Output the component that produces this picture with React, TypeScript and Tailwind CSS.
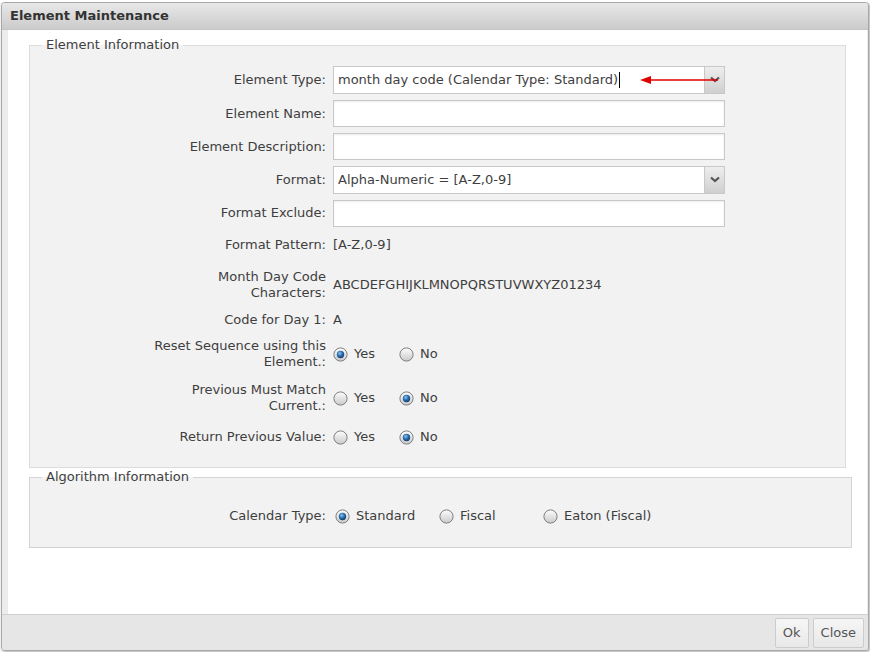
import React from 'react';

const font = { fontFamily: '"DejaVu Sans", Verdana, sans-serif' };

const Radio = ({ checked }: { checked?: boolean }) => (
  <svg width="15" height="15" viewBox="0 0 15 15" className="shrink-0">
    <defs>
      <linearGradient id="rg" x1="0" y1="0" x2="0" y2="1">
        <stop offset="0" stopColor="#fdfdfd" />
        <stop offset="1" stopColor="#cacaca" />
      </linearGradient>
      <radialGradient id="dot" cx="0.4" cy="0.35" r="0.7">
        <stop offset="0" stopColor="#8fc4f0" />
        <stop offset="0.5" stopColor="#2a6fb0" />
        <stop offset="1" stopColor="#0d3a66" />
      </radialGradient>
    </defs>
    <circle cx="7.5" cy="7.5" r="6.6" fill="url(#rg)" stroke="#7f7f7f" strokeWidth="1" />
    {checked && <circle cx="7.5" cy="7.5" r="3.7" fill="url(#dot)" />}
  </svg>
);

const Opt = ({ label, checked, w }: { label: string; checked?: boolean; w: string }) => (
  <div className={`flex items-center gap-[6px] ${w}`}>
    <Radio checked={checked} />
    <span>{label}</span>
  </div>
);

const Row = ({ label, h, children }: { label: React.ReactNode; h: string; children?: React.ReactNode }) => (
  <div className={`flex items-center ${h}`}>
    <div className="w-[303px] text-right leading-[16px] pr-[7px]">{label}</div>
    <div className="flex items-center flex-1">{children}</div>
  </div>
);

const TextInput = () => (
  <div className="h-[27px] w-[392px] bg-white border border-[#c8c8c8] shadow-[inset_0_1px_2px_rgba(0,0,0,0.08)]" />
);

const Chevron = () => (
  <div className="w-[20px] h-full border-l border-[#c8c8c8] bg-gradient-to-b from-[#eeeeee] to-[#cfcfcf] flex items-center justify-center">
    <svg width="10" height="7" viewBox="0 0 10 7">
      <path d="M1 1.5 L5 5 L9 1.5" fill="none" stroke="#555" strokeWidth="2.2" />
    </svg>
  </div>
);

export default function App() {
  return (
    <div className="w-[870px] h-[652px] bg-[#f4f4f4] text-[13px] text-[#3e3e3e]" style={font}>
      <div className="w-[868px] h-[649px] mt-[2px] ml-[1px] rounded-[4px] border border-[#a8a8a8] bg-[#ececec] flex flex-col overflow-hidden shadow-[1px_1px_2px_rgba(0,0,0,0.25)]">
        <div className="h-[27px] bg-gradient-to-b from-[#e8e8e8] to-[#cbcbcb] flex items-center pl-[8px] font-bold text-[#333] text-[13px] border-b border-[#c4c4c4]">
          Element Maintenance
        </div>
        <div className="flex-1 mx-[6px] mr-[1px] bg-white pt-[7px] pl-[21px]">
          <fieldset className="w-[817px] h-[431px] border border-[#dcdcdc] bg-[#f2f2f2] pt-[9px]">
            <legend className="ml-[12px] px-[4px] leading-[16px]">Element Information</legend>
            <Row label="Element Type:" h="h-[35px]">
              <div className="h-[28px] w-[392px] bg-white border border-[#c8c8c8] flex items-stretch">
                <div className="flex-1 flex items-center pl-[4px] relative">
                  <span>month day code (Calendar Type: Standard)</span>
                  <span className="w-[1px] h-[16px] bg-black ml-[1px]" />
                  <svg className="absolute left-[306px] top-[8px]" width="80" height="10" viewBox="0 0 80 10">
                    <line x1="8" y1="5" x2="78" y2="5" stroke="#e00000" strokeWidth="1.6" />
                    <path d="M0 5 L11 1 L11 9 Z" fill="#e00000" />
                  </svg>
                </div>
                <Chevron />
              </div>
            </Row>
            <Row label="Element Name:" h="h-[33px]"><TextInput /></Row>
            <Row label="Element Description:" h="h-[33px]"><TextInput /></Row>
            <Row label="Format:" h="h-[33px]">
              <div className="h-[28px] w-[392px] bg-white border border-[#c8c8c8] flex items-stretch">
                <div className="flex-1 flex items-center pl-[4px]">Alpha-Numeric = [A-Z,0-9]</div>
                <Chevron />
              </div>
            </Row>
            <Row label="Format Exclude:" h="h-[34px]"><TextInput /></Row>
            <Row label="Format Pattern:" h="h-[30px]">[A-Z,0-9]</Row>
            <Row label={<>Month Day Code<br />Characters:</>} h="h-[50px]">ABCDEFGHIJKLMNOPQRSTUVWXYZ01234</Row>
            <Row label="Code for Day 1:" h="h-[20px]">A</Row>
            <Row label={<>Reset Sequence using this<br />Element.:</>} h="h-[48px]">
              <Opt label="Yes" checked w="w-[66px]" />
              <Opt label="No" w="w-[60px]" />
            </Row>
            <Row label={<>Previous Must Match<br />Current.:</>} h="h-[40px]">
              <Opt label="Yes" w="w-[66px]" />
              <Opt label="No" checked w="w-[60px]" />
            </Row>
            <Row label="Return Previous Value:" h="h-[38px]">
              <Opt label="Yes" w="w-[66px]" />
              <Opt label="No" checked w="w-[60px]" />
            </Row>
          </fieldset>
          <fieldset className="w-[823px] h-[79px] mt-[1px] border border-[#d4d4d4] bg-[#f2f2f2] pt-[14px]">
            <legend className="ml-[12px] px-[4px] leading-[16px]">Algorithm Information</legend>
            <Row label="Calendar Type:" h="h-[34px]">
              <div className="pl-[2px] flex items-center">
                <Opt label="Standard" checked w="w-[104px]" />
                <Opt label="Fiscal" w="w-[104px]" />
                <Opt label="Eaton (Fiscal)" w="w-[120px]" />
              </div>
            </Row>
          </fieldset>
        </div>
        <div className="h-[36px] bg-[#e6e6e6] border-t border-[#d4cfcf] flex items-center justify-end gap-[4px] pr-[4px]">
          <button className="h-[30px] px-[7px] border border-[#cccccc] rounded-[2px] bg-gradient-to-b from-[#f6f6f6] to-[#e8e8e8] text-[#555] text-[13px]">Ok</button>
          <button className="h-[30px] px-[7px] border border-[#cccccc] rounded-[2px] bg-gradient-to-b from-[#f6f6f6] to-[#e8e8e8] text-[#555] text-[13px]">Close</button>
        </div>
      </div>
    </div>
  );
}
